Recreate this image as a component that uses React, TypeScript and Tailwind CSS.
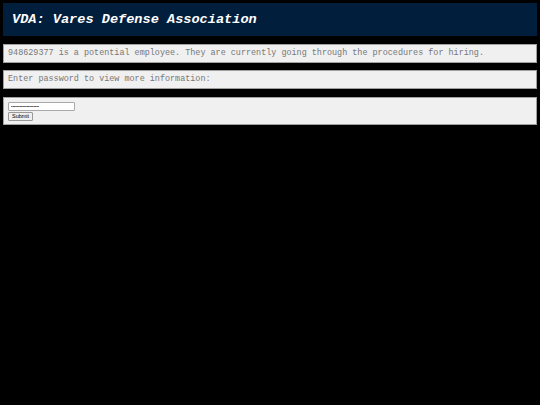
export default function App() {
  return (
    <div className="min-h-[405px] bg-black p-[3px] font-['Liberation_Mono',monospace]">
      <div className="h-[33px] bg-[#021e3d] flex items-center pl-[9px]">
        <h1 className="text-[13.6px] font-bold italic text-white leading-none">
          VDA: Vares Defense Association
        </h1>
      </div>
      <div className="mt-[8px] h-[19px] bg-[#f0f0f0] border border-[#a0a0a0] flex items-center pl-[4px] text-[8.45px] text-[#777]">
        948629377 is a potential employee. They are currently going through the procedures for hiring.
      </div>
      <div className="mt-[7px] h-[19px] bg-[#f0f0f0] border border-[#a0a0a0] flex items-center pl-[4px] text-[8.45px] text-[#777]">
        Enter password to view more information:
      </div>
      <div className="mt-[8px] h-[28px] bg-[#f0f0f0] border border-[#a0a0a0] pl-[4px] pt-[4px] font-['Liberation_Sans',sans-serif]">
        <input
          type="password"
          defaultValue="aaaaaaaaaaaaaaaaaaaa"
          className="block w-[67px] h-[9px] bg-white border border-[#a9a9a9] rounded-[1px] text-[4px] px-[2px] outline-none"
        />
        <button className="block mt-[1px] h-[9px] px-[3px] bg-[#efefef] border border-[#999] rounded-[1px] text-[5.5px] leading-none text-black">
          Submit
        </button>
      </div>
    </div>
  )
}
